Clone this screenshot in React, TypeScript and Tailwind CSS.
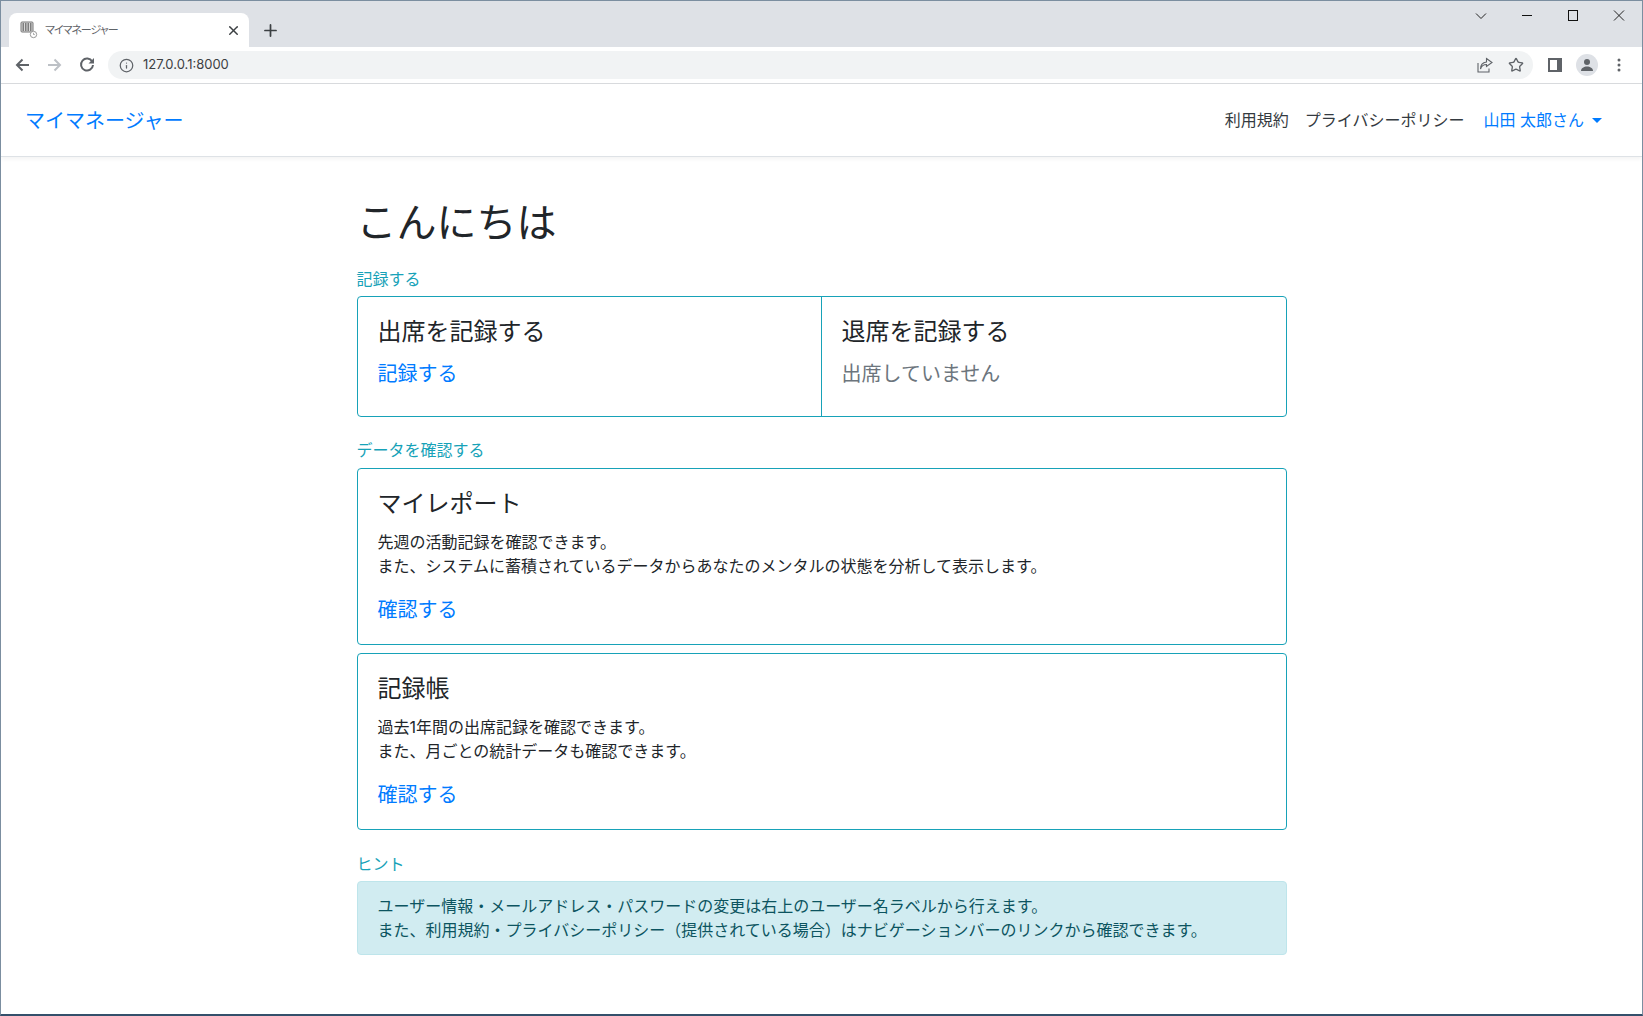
import React from "react";
import { Info, Plus, X, Star } from "lucide-react";

const FONT = "font-['Inter','Noto_Sans_CJK_JP',sans-serif]";

function Favicon() {
  return (
    <svg width="18" height="18" viewBox="0 0 18 18" className="mr-[7px] shrink-0">
      <rect x="1" y="1" width="12" height="10" rx="1" fill="#d8d8d8" stroke="#777" />
      <path
        d="M2.500 3h1.500M5 3h1.500M7.500 3H9M10 3h1.500M2.500 5h1.500M5 5h1.500M7.500 5H9M10 5h1.500M2.500 7h1.500M5 7h1.500M7.500 7H9M10 7h1.500M2.500 9h1.500M5 9h1.500M7.500 9H9M10 9h1.500"
        stroke="#222"
        strokeWidth="1.200"
      />
      <circle cx="13.500" cy="13.500" r="3.200" fill="#fff" stroke="#999" />
      <path d="M13.500 11.800v1.700h1.300" stroke="#888" strokeWidth="0.700" fill="none" />
    </svg>
  );
}

function WindowButtons() {
  return (
    <div className="ml-auto flex h-full items-start pt-[9px]">
      <div className="flex w-[46px] justify-center">
        <svg width="12" height="12" viewBox="0 0 12 12" fill="none" stroke="#222" strokeWidth="1">
          <path d="M1 3.500l5 5 5-5" />
        </svg>
      </div>
      <div className="flex w-[46px] justify-center">
        <svg width="12" height="12" viewBox="0 0 12 12" fill="none" stroke="#111" strokeWidth="1">
          <path d="M1 5.500h10" />
        </svg>
      </div>
      <div className="flex w-[46px] justify-center">
        <svg width="12" height="12" viewBox="0 0 12 12" fill="none" stroke="#111" strokeWidth="1">
          <rect x="1.500" y="0.500" width="9" height="10" />
        </svg>
      </div>
      <div className="flex w-[46px] justify-center">
        <svg width="12" height="12" viewBox="0 0 12 12" fill="none" stroke="#222" strokeWidth="1">
          <path d="M1 0.500l10 10M11 0.500l-10 10" />
        </svg>
      </div>
    </div>
  );
}

function BrowserChrome() {
  return (
    <div>
      <div className="flex h-[46px] items-end bg-[#dee1e6]">
        <div className="relative ml-[8px] flex h-[34px] w-[240px] items-center rounded-t-lg bg-white pl-[11px] pr-[6px] text-[#5f6368]">
          <Favicon />
          <span className="flex-1 text-[11px] [font-feature-settings:'palt'] tracking-[-1px]">マイマネージャー</span>
          <X size={15} strokeWidth={2.4} className="mr-[2px] text-[#3c4043]" />
        </div>
        <Plus size={19} strokeWidth={2.2} className="mb-[7px] ml-[12px] text-[#3c4043]" />
        <WindowButtons />
      </div>
      <div className="flex h-[37px] items-center border-b border-[#d9dbde] bg-white">
        <svg width="16" height="14" viewBox="0 0 16 14" fill="none" stroke="#5f6368" strokeWidth="2" className="ml-[13px]">
          <path d="M15 7H3M8.500 1.500L3 7l5.500 5.500" />
        </svg>
        <svg width="16" height="14" viewBox="0 0 16 14" fill="none" stroke="#bdc1c6" strokeWidth="2" className="ml-[17px]">
          <path d="M1 7h12M7.500 1.500L13 7l-5.500 5.500" />
        </svg>
        <svg width="16" height="16" viewBox="0 0 16 16" className="ml-[16px]">
          <path d="M13.200 4.500A6 6 0 1 0 14 8" fill="none" stroke="#5f6368" strokeWidth="2" />
          <path d="M15 1v5.500H9.500z" fill="#5f6368" />
        </svg>
        <div className="ml-[13px] flex h-[28px] w-[1425px] items-center rounded-full bg-[#f1f3f4] pl-[11px] pr-[9px]">
          <Info size={15} strokeWidth={2} className="text-[#5f6368]" />
          <span className="ml-[9px] flex-1 text-[13px] text-[#3c4043]">127.0.0.1:8000</span>
          <svg width="16" height="16" viewBox="0 0 16 16" fill="none" stroke="#5f6368" strokeWidth="1.100" className="mr-[15px]">
            <path d="M1 6v9h11v-3.500M9.500 1.500l5.500 4-5.500 4V7.500C6.500 7.500 4.500 9 3.500 12c0-4 2-6.500 6-7z" />
          </svg>
          <Star size={16} strokeWidth={2} className="text-[#5f6368]" />
        </div>
        <svg width="14" height="14" viewBox="0 0 14 14" className="ml-[15px]">
          <rect x="0" y="0" width="14" height="14" fill="#5f6368" />
          <rect x="2" y="2" width="7" height="10" fill="#fff" />
        </svg>
        <div className="ml-[14px] flex h-[22px] w-[22px] items-center justify-center overflow-hidden rounded-full bg-[#dee1e6]">
          <svg width="14" height="14" viewBox="0 0 14 14" fill="#5f6368">
            <circle cx="7" cy="4" r="3" />
            <path d="M1 13c0-3 3-4.500 6-4.500s6 1.500 6 4.500z" />
          </svg>
        </div>
        <svg width="4" height="14" viewBox="0 0 4 14" fill="#5f6368" className="ml-[19px]">
          <circle cx="2" cy="2" r="1.500" />
          <circle cx="2" cy="7" r="1.500" />
          <circle cx="2" cy="12" r="1.500" />
        </svg>
      </div>
    </div>
  );
}

function Navbar() {
  return (
    <nav className="flex h-[73px] items-center border-b border-[#dee2e6] bg-white pl-[24px] pr-[40px] shadow-[0_2px_4px_rgba(0,0,0,0.05)]">
      <a className="mt-[2px] text-[20px] leading-[30px] text-[#007bff]">マイマネージャー</a>
      <div className="ml-auto flex items-center text-[16px] leading-[24px] text-[#343a40]">
        <a>利用規約</a>
        <a className="ml-[16px]">プライバシーポリシー</a>
        <a className="ml-[19px] flex items-center text-[#007bff]">
          山田 太郎さん
          <span className="ml-[8px] h-0 w-0 border-x-[5px] border-t-[5px] border-x-transparent border-t-[#007bff]" />
        </a>
      </div>
    </nav>
  );
}

function SectionLabel({ children }: { children: React.ReactNode }) {
  return <div className="text-[16px] leading-[24px] text-[#17a2b8]">{children}</div>;
}

function DataCard({ title, lines }: { title: string; lines: string[] }) {
  return (
    <div className="h-[177px] rounded border border-[#17a2b8] p-[20px]">
      <h5 className="mb-[12px] text-[24px] leading-[29px] text-[#212529]">{title}</h5>
      <p className="mb-[17px] text-[16px] leading-[24px] text-[#212529]">
        {lines[0]}
        <br />
        {lines[1]}
      </p>
      <a className="text-[20px] leading-[30px] text-[#007bff]">確認する</a>
    </div>
  );
}

export default function App() {
  return (
    <div className={`${FONT} h-[1016px] overflow-hidden border border-b-2 border-[#7b8ea0] border-b-[#34506b] bg-white`}>
      <BrowserChrome />
      <Navbar />
      <main className="mx-auto w-[930px] pt-[42px]">
        <h1 className="mb-[20px] text-[40px] leading-[48px] text-[#212529]">こんにちは</h1>
        <SectionLabel>記録する</SectionLabel>
        <div className="mt-[5px] flex h-[121px] rounded border border-[#17a2b8]">
          <div className="w-[464px] border-r border-[#17a2b8] p-[20px]">
            <h5 className="mb-[13px] text-[24px] leading-[29px] text-[#212529]">出席を記録する</h5>
            <a className="text-[20px] leading-[30px] text-[#007bff]">記録する</a>
          </div>
          <div className="flex-1 p-[20px]">
            <h5 className="mb-[13px] text-[24px] leading-[29px] text-[#212529]">退席を記録する</h5>
            <span className="text-[20px] leading-[30px] text-[#6c757d]">出席していません</span>
          </div>
        </div>
        <div className="mt-[21px]">
          <SectionLabel>データを確認する</SectionLabel>
        </div>
        <div className="mt-[6px] flex flex-col gap-[8px]">
          <DataCard
            title="マイレポート"
            lines={[
              "先週の活動記録を確認できます。",
              "また、システムに蓄積されているデータからあなたのメンタルの状態を分析して表示します。",
            ]}
          />
          <DataCard
            title="記録帳"
            lines={["過去1年間の出席記録を確認できます。", "また、月ごとの統計データも確認できます。"]}
          />
        </div>
        <div className="mt-[22px]">
          <SectionLabel>ヒント</SectionLabel>
        </div>
        <div className="mt-[5px] h-[74px] rounded border border-[#bee5eb] bg-[#d1ecf1] px-[20px] py-[12px] text-[16px] leading-[24px] text-[#0c5460]">
          ユーザー情報・メールアドレス・パスワードの変更は右上のユーザー名ラベルから行えます。
          <br />
          また、利用規約・プライバシーポリシー（提供されている場合）はナビゲーションバーのリンクから確認できます。
        </div>
      </main>
    </div>
  );
}
